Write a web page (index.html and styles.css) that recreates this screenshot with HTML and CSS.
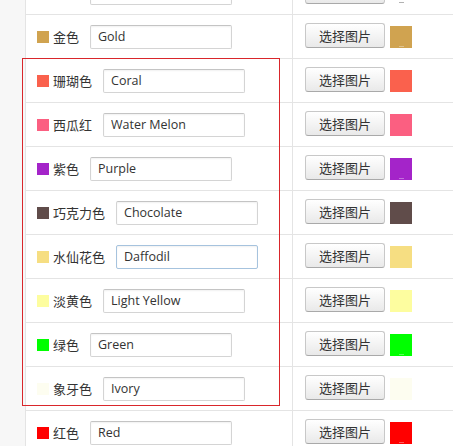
FILE: index.html
```html
<!DOCTYPE html>
<html lang="zh-CN">
<head>
    <meta charset="UTF-8">
    <meta name="viewport" content="width=device-width, initial-scale=1.0">
    <title>颜色设置</title>
    <link rel="stylesheet" href="styles.css">
</head>
<body>
    <div class="color-list">
        <div class="row">
            <div class="name-cell">
                <span class="dot" style="background-color: #ffffff;"></span>
                <span class="label">白色</span>
                <input type="text" class="color-input" value="White">
            </div>
            <div class="pick-cell">
                <button class="pick-btn">选择图片</button>
                <span class="swatch mark dark" style="background-color: #ffffff;"></span>
            </div>
        </div>
        <div class="row">
            <div class="name-cell">
                <span class="dot" style="background-color: #d0a350;"></span>
                <span class="label">金色</span>
                <input type="text" class="color-input" value="Gold">
            </div>
            <div class="pick-cell">
                <button class="pick-btn">选择图片</button>
                <span class="swatch mark" style="background-color: #d0a350;"></span>
            </div>
        </div>
        <div class="row">
            <div class="name-cell">
                <span class="dot" style="background-color: #fa614d;"></span>
                <span class="label">珊瑚色</span>
                <input type="text" class="color-input" value="Coral">
            </div>
            <div class="pick-cell">
                <button class="pick-btn">选择图片</button>
                <span class="swatch" style="background-color: #fa614d;"></span>
            </div>
        </div>
        <div class="row">
            <div class="name-cell">
                <span class="dot" style="background-color: #fb5f81;"></span>
                <span class="label">西瓜红</span>
                <input type="text" class="color-input" value="Water Melon">
            </div>
            <div class="pick-cell">
                <button class="pick-btn">选择图片</button>
                <span class="swatch" style="background-color: #fb5f81;"></span>
            </div>
        </div>
        <div class="row">
            <div class="name-cell">
                <span class="dot" style="background-color: #a424c9;"></span>
                <span class="label">紫色</span>
                <input type="text" class="color-input" value="Purple">
            </div>
            <div class="pick-cell">
                <button class="pick-btn">选择图片</button>
                <span class="swatch mark" style="background-color: #a424c9;"></span>
            </div>
        </div>
        <div class="row">
            <div class="name-cell">
                <span class="dot" style="background-color: #604c4a;"></span>
                <span class="label">巧克力色</span>
                <input type="text" class="color-input" value="Chocolate">
            </div>
            <div class="pick-cell">
                <button class="pick-btn">选择图片</button>
                <span class="swatch" style="background-color: #604c4a;"></span>
            </div>
        </div>
        <div class="row">
            <div class="name-cell">
                <span class="dot" style="background-color: #f6de82;"></span>
                <span class="label">水仙花色</span>
                <input type="text" class="color-input focus" value="Daffodil">
            </div>
            <div class="pick-cell">
                <button class="pick-btn">选择图片</button>
                <span class="swatch" style="background-color: #f6de82;"></span>
            </div>
        </div>
        <div class="row">
            <div class="name-cell">
                <span class="dot" style="background-color: #fdfd9f;"></span>
                <span class="label">淡黄色</span>
                <input type="text" class="color-input" value="Light Yellow">
            </div>
            <div class="pick-cell">
                <button class="pick-btn">选择图片</button>
                <span class="swatch" style="background-color: #fdfd9f;"></span>
            </div>
        </div>
        <div class="row">
            <div class="name-cell">
                <span class="dot" style="background-color: #00ff00;"></span>
                <span class="label">绿色</span>
                <input type="text" class="color-input" value="Green">
            </div>
            <div class="pick-cell">
                <button class="pick-btn">选择图片</button>
                <span class="swatch mark" style="background-color: #00ff00;"></span>
            </div>
        </div>
        <div class="row">
            <div class="name-cell">
                <span class="dot" style="background-color: #fdfdf0;"></span>
                <span class="label">象牙色</span>
                <input type="text" class="color-input" value="Ivory">
            </div>
            <div class="pick-cell">
                <button class="pick-btn">选择图片</button>
                <span class="swatch" style="background-color: #fdfdf0;"></span>
            </div>
        </div>
        <div class="row">
            <div class="name-cell">
                <span class="dot" style="background-color: #ff0000;"></span>
                <span class="label">红色</span>
                <input type="text" class="color-input" value="Red">
            </div>
            <div class="pick-cell">
                <button class="pick-btn">选择图片</button>
                <span class="swatch mark" style="background-color: #ff0000;"></span>
            </div>
        </div>
    </div>

    <!-- 标注框 -->
    <div class="highlight"></div>
</body>
</html>
```

FILE: styles.css
```css
body {
    margin: 0;
    padding: 0;
    background-color: #f7f7f7;
    font-family: "Noto Sans CJK SC", "Open Sans", sans-serif;
    font-size: 13px;
    color: #333;
    overflow: hidden;
}

.color-list {
    margin: -29px 0 0 25px;
    border-left: 1px solid #e4e4e4;
    background-color: #ffffff;
}

.row {
    display: flex;
    height: 43px;
    border-bottom: 1px solid #e4e4e4;
}

.name-cell {
    width: 255px;
    flex-shrink: 0;
    display: flex;
    align-items: center;
    padding-left: 11px;
    border-right: 1px solid #e4e4e4;
}

.dot {
    width: 12px;
    height: 12px;
    margin-right: 4px;
    flex-shrink: 0;
}

.label {
    line-height: 1;
    white-space: nowrap;
}

.color-input {
    width: 142px;
    height: 24px;
    margin: 0 0 0 11px;
    padding: 0 7px;
    box-sizing: border-box;
    border: 1px solid #d4d4d4;
    border-top-color: #c4c4c4;
    border-radius: 2px;
    box-shadow: inset 0 1px 2px rgba(0, 0, 0, 0.06);
    font-family: "Open Sans", sans-serif;
    font-size: 12.5px;
    color: #333;
    background-color: #fff;
    outline: none;
}

.color-input.focus {
    border-color: #a6c3de;
}

.pick-cell {
    display: flex;
    align-items: center;
    padding-left: 12px;
}

.pick-btn {
    width: 80px;
    height: 25px;
    margin-top: -2px;
    padding: 0;
    border: 1px solid #c8c8c8;
    border-bottom-color: #a9a9a9;
    border-radius: 3px;
    background: linear-gradient(#ffffff, #e9e9e9);
    font-family: "Noto Sans CJK SC", sans-serif;
    font-size: 13px;
    color: #333;
    cursor: pointer;
}

.swatch {
    position: relative;
    width: 22px;
    height: 22px;
    margin-left: 5px;
}

/* 缩略图底部的小标记 */
.swatch.mark::after {
    content: "";
    position: absolute;
    left: 9px;
    bottom: 1px;
    width: 5px;
    height: 1px;
    background-color: rgba(255, 255, 255, 0.35);
}

.swatch.mark.dark::after {
    background-color: rgba(0, 0, 0, 0.3);
}

.highlight {
    position: absolute;
    left: 22px;
    top: 58px;
    width: 258px;
    height: 348px;
    box-sizing: border-box;
    border: 1px solid #d9262b;
    pointer-events: none;
}
```
